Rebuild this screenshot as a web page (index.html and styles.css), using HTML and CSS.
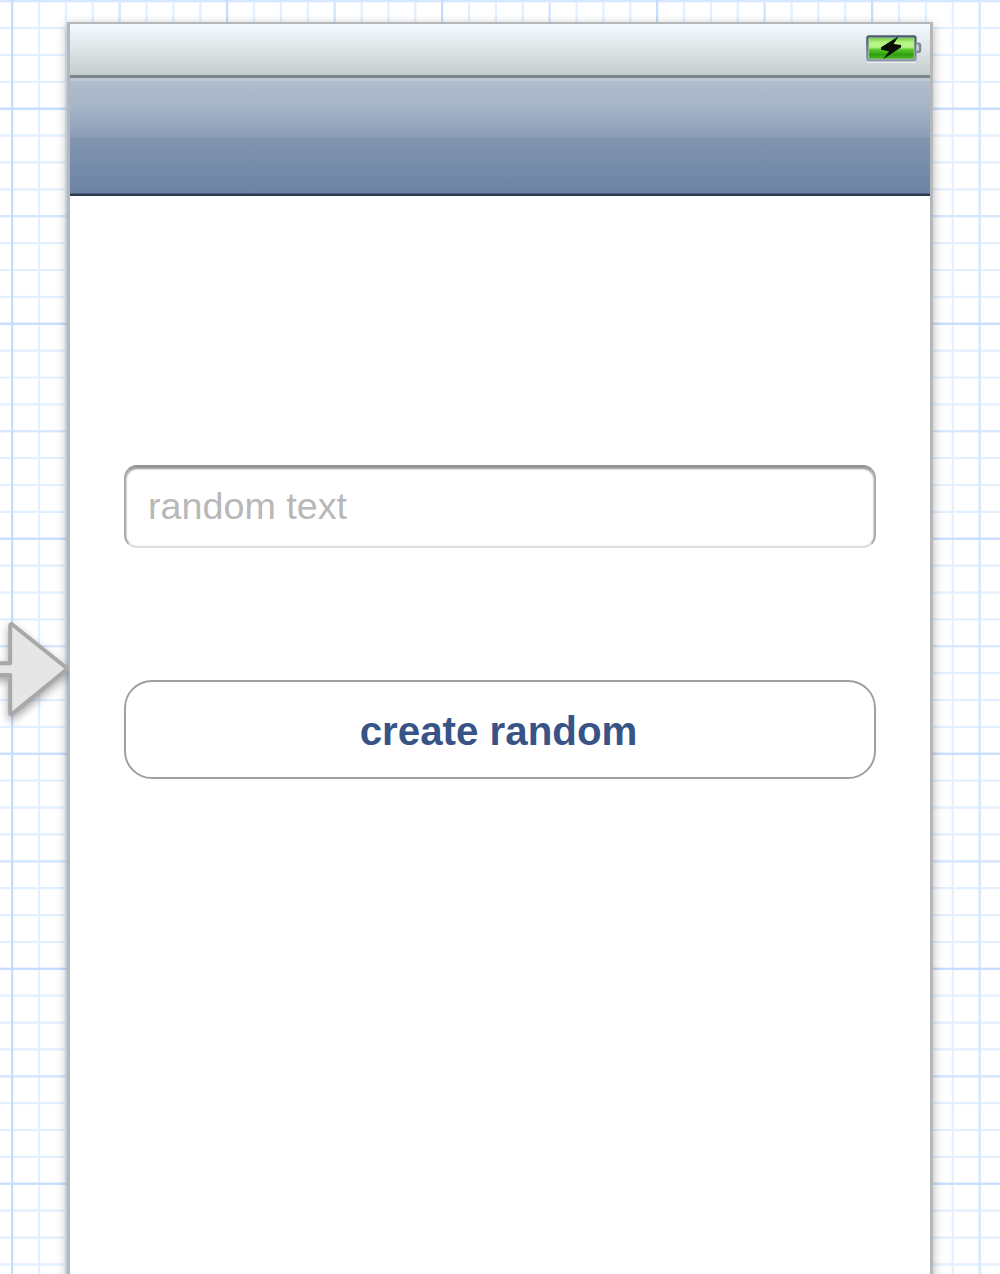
FILE: index.html
```html
<!DOCTYPE html>
<html lang="en">
<head>
<meta charset="utf-8">
<title>Storyboard</title>
<link rel="stylesheet" href="styles.css">
</head>
<body>
<main class="canvas">
  <svg class="grid" width="1000" height="1274" viewBox="0 0 1000 1274" aria-hidden="true">
    <g class="minor">
      <path d="M0 637H1000" stroke-width="1274" stroke-dasharray="2.2 24.675" stroke-dashoffset="15.8"/>
      <path d="M500 0V1274" stroke-width="1000" stroke-dasharray="2.2 24.678" stroke-dashoffset="-.1"/>
    </g>
    <g class="medium">
      <path d="M0 637H1000" stroke-width="1274" stroke-dasharray="2.2 212.8" stroke-dashoffset="96.4"/>
      <path d="M500 0V1274" stroke-width="1000" stroke-dasharray="2.2 212.82" stroke-dashoffset="-.1"/>
    </g>
    <g class="major">
      <path d="M0 637H1000" stroke-width="1274" stroke-dasharray="2 213" stroke-dashoffset="203.9"/>
      <path d="M500 0V1274" stroke-width="1000" stroke-dasharray="2 213.02" stroke-dashoffset="107.3"/>
    </g>
  </svg>

  <section class="phone">
    <header class="status">
      <svg class="battery" width="58" height="30" viewBox="0 0 58 30" aria-label="Battery charging">
        <defs>
          <linearGradient id="charge" x1="0" y1="0" x2="0" y2="1">
            <stop offset="0" stop-color="#78cf48"/>
            <stop offset=".2" stop-color="#b4f483"/>
            <stop offset=".43" stop-color="#b9f58a"/>
            <stop offset=".56" stop-color="#59c72b"/>
            <stop offset=".8" stop-color="#2d9e0e"/>
            <stop offset="1" stop-color="#50b62d"/>
          </linearGradient>
          <linearGradient id="case" x1="0" y1="0" x2="0" y2="1">
            <stop offset="0" stop-color="#4c586d"/>
            <stop offset="1" stop-color="#8e9aa9"/>
          </linearGradient>
        </defs>
        <g transform="translate(.6 .7)">
          <path d="M3 28.500H51" stroke="#edf1f3" stroke-width="2"/>
          <rect x="2.700" y="2.600" width="48.200" height="24" rx="1.500" fill="#a9cf9f" stroke="url(#case)" stroke-width="2.200"/>
          <rect x="4.500" y="4.500" width="44.600" height="20.500" fill="url(#charge)"/>
          <path d="M52 9.800h1.600q1.900 0 1.900 1.900v4.600q0 1.900-1.900 1.900H52" fill="#c5ced7" stroke="#78869a" stroke-width="2.200"/>
          <path d="M34 2.500 16.500 13.500v2.500l8 1.500L18.500 25.500 36.500 13.500v-2.300l-7.500-.8z" fill="#090f05"/>
        </g>
      </svg>
    </header>
    <div class="navbar"></div>
    <div class="content">
      <input class="field" type="text" placeholder="random text" aria-label="random text">
      <button class="button" type="button">create random</button>
    </div>
  </section>

  <svg class="entry" width="69" height="130" viewBox="0 0 69 130" aria-hidden="true">
    <path d="M-10 63.200H10.200V25.500Q10.200 23 12.600 24.800L67.500 68.800 12.600 113.600Q10.200 115.400 10.200 112.900V75H-10"/>
  </svg>
</main>
</body>
</html>
```
FILE: styles.css
```css
* { box-sizing: border-box; }

body {
  margin: 0;
  background: #fff;
  font-family: "Liberation Sans", Arial, sans-serif;
}

.canvas {
  position: relative;
  height: 1274px;
  padding: 21.500px 67px 0;
  overflow: hidden;
}

.grid {
  position: absolute;
  inset: 0;
}

.minor { stroke: #e2f0ff; }
.medium { stroke: #d6e7ff; }
.major { stroke: #c3dcff; }

.phone {
  position: relative;
  display: flex;
  flex-direction: column;
  width: 866px;
  height: 1300px;
  padding: 2px 3px 0;
  background: #b6b7b8;
  box-shadow: 0 3px 10px rgba(0, 0, 0, .3);
}

.status {
  display: flex;
  justify-content: flex-end;
  flex: none;
  height: 54px;
  padding: 9px 8px 0 0;
  background: linear-gradient(#f4fafe, #c5cecf);
  border-bottom: 3px solid #7b8587;
}

.navbar {
  flex: none;
  height: 118px;
  background: linear-gradient(#b0bdce, #a4b3c6 25%, #8a9cb7 50%, #8195af 51%, #6c83a4);
  border-top: 3px solid #bdc9d7;
  border-bottom: 2px solid #2d394c;
  box-shadow: inset 0 -1px #4f617d;
}

.content {
  display: flex;
  flex: 1;
  flex-direction: column;
  gap: 132px;
  padding: 269px 54px 0;
  background: #fff;
}

.field {
  width: 100%;
  height: 83px;
  padding: 1px 22px 0;
  border: 2px solid;
  border-color: #929594 #a9abaa #dedede;
  border-radius: 13px;
  background: #fff;
  box-shadow: inset 0 2px 2px #929594, inset 0 0 2px #ddd;
  font: 37.700px "Liberation Sans", Arial, sans-serif;
  color: #333;
}

.field::placeholder {
  color: #b8b8b8;
  opacity: 1;
}

.button {
  width: 100%;
  height: 99px;
  padding: 6px 3px 0 0;
  border: 2px solid #a0a0a0;
  border-radius: 28px;
  background: #fff;
  color: #385487;
  font: bold 40.300px "Liberation Sans", Arial, sans-serif;
}

.entry {
  position: absolute;
  top: 600px;
  left: 0;
  overflow: hidden;
  fill: #e6e6e6;
  stroke: #a8a8a8;
  stroke-width: 4;
  stroke-linejoin: round;
}

.entry path {
  filter: drop-shadow(0 4px 4px rgba(0, 0, 0, .35));
}
```
